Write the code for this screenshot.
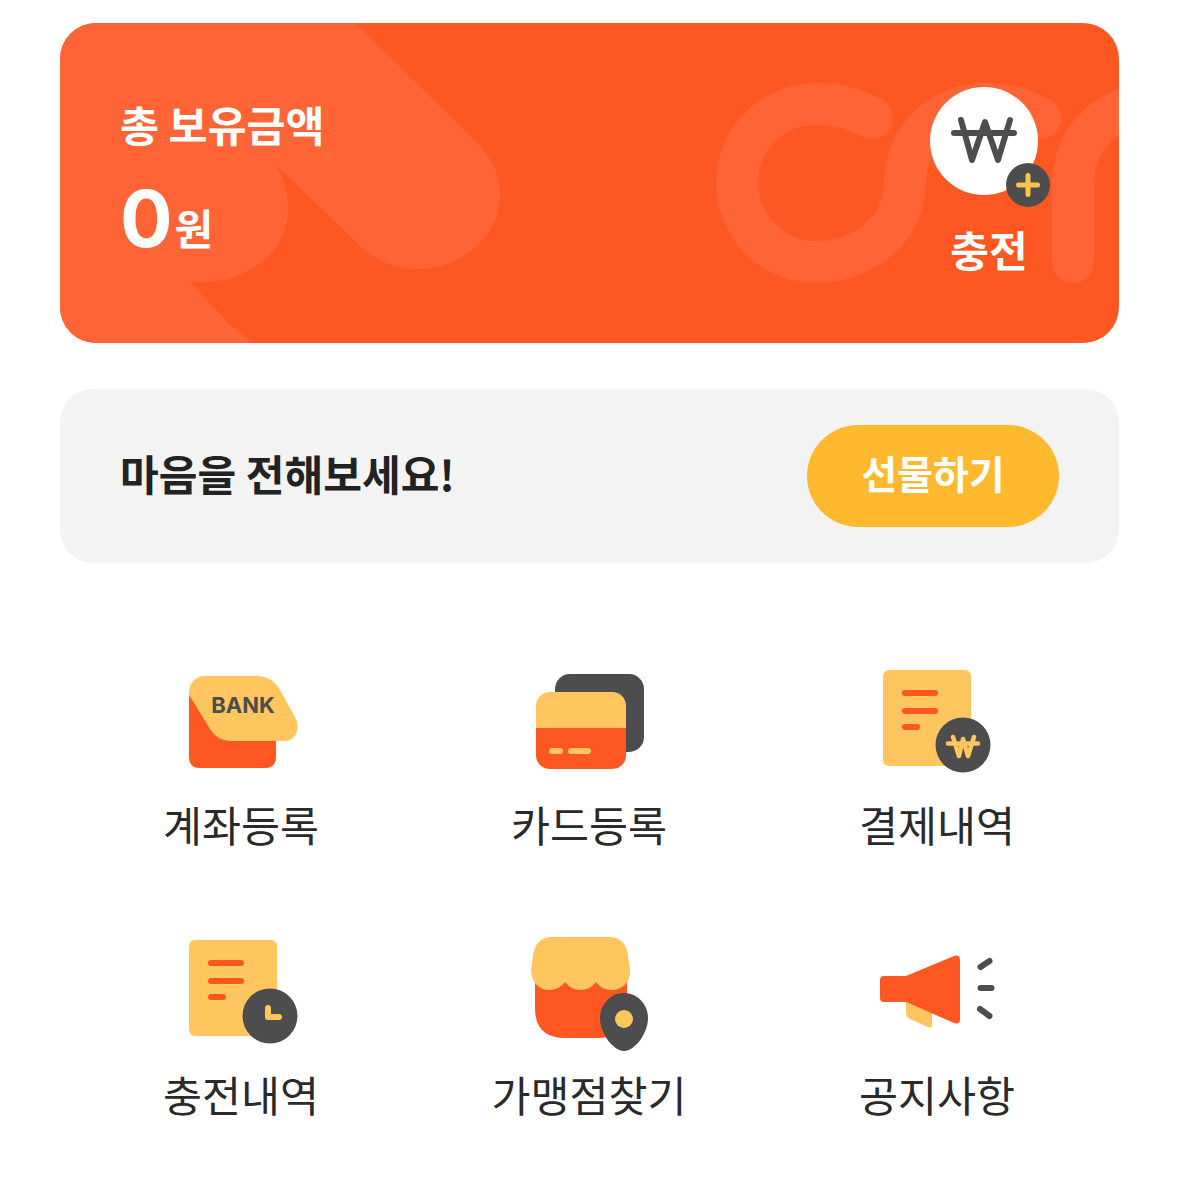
<script>
  const menu = ['계좌등록', '카드등록', '결제내역', '충전내역', '가맹점찾기', '공지사항'];
</script>

<main class="page">
  <section class="card">
    <svg class="deco" viewBox="60 23 1059 320" aria-hidden="true">
      <path class="fill" d="M60 23 H356 L472 138 C490 155 500 172 500 194 C500 236 462 269 418 269 C396 269 376 261 360 246 L276 165 C284 178 288 192 288 209 C288 250 250 282 202 282 H190 L229 324 C238 331 246 337 252 343 H60Z" />
      <path class="stroke" d="M872 118 C856 109 838 104 816 104 A79 79 0 0 0 737 183 A79 79 0 0 0 816 262 A89 79 0 0 0 905 183 A79 79 0 0 1 984 104 C1006 104 1024 109 1040 118" />
      <path class="stroke" d="M1073 262 V183 A79 79 0 0 1 1152 104" />
    </svg>
    <div class="balance">
      <h2 class="title">총 보유금액</h2>
      <p class="amount"><strong>0</strong><span>원</span></p>
    </div>
    <div class="charge">
      <div class="coin">
        <svg class="won" viewBox="946 118 76 54">
          <path d="M954 137 H1014 M961 124 L972 164 L985 126 L998 164 L1010 124" />
        </svg>
        <span class="plus">
          <svg viewBox="0 0 44 44"><path d="M22 12.5 V31.5 M12.5 22 H31.5" /></svg>
        </span>
      </div>
      <span class="charge-label">충전</span>
    </div>
  </section>

  <section class="gift">
    <p>마음을 전해보세요!</p>
    <button>선물하기</button>
  </section>

  <section class="menu">
    <div class="item">
      <svg viewBox="181 660 120 120">
        <path d="M189 692 H276 V757 Q276 768 265 768 H200 Q189 768 189 757Z" fill="#FF5722" />
        <path d="M189 695 V692 C189 683 196 676 205 676 H256 C267 676 274 680 280 690 L295 717 C301 728 296 741 284 741 H232 C222 741 215 737 210 729Z" fill="#FFC55F" />
        <text x="243" y="713" text-anchor="middle" class="bank">BANK</text>
      </svg>
      <span>{menu[0]}</span>
    </div>
    <div class="item">
      <svg viewBox="529 660 120 120">
        <rect x="555" y="674" width="89" height="78" rx="15" fill="#4D4D4D" />
        <path d="M536 728 H626 V755 C626 763 620 769 612 769 H550 C542 769 536 763 536 755Z" fill="#FF5722" />
        <path d="M536 728 V706 C536 698 542 692 550 692 H612 C620 692 626 698 626 706 V728Z" fill="#FFC55F" />
        <rect x="549" y="748" width="14" height="6" rx="3" fill="#FFC55F" />
        <rect x="568" y="748" width="23" height="6" rx="3" fill="#FFC55F" />
      </svg>
      <span>{menu[1]}</span>
    </div>
    <div class="item">
      <svg viewBox="877 660 120 120">
        <rect x="883" y="670" width="88" height="96" rx="6" fill="#FFC55F" />
        <path class="lines" d="M905 693 H935 M905 711 H935 M905 727 H917" />
        <circle cx="963" cy="745" r="27.5" fill="#4D4D4D" />
        <path class="won-y" d="M948 743.5 H978 M953 737 L959 756 L963 739 L968 756 L974 737" />
      </svg>
      <span>{menu[2]}</span>
    </div>
    <div class="item">
      <svg viewBox="181 930 120 120">
        <rect x="189" y="940" width="88" height="96" rx="6" fill="#FFC55F" />
        <path class="lines" d="M211 963 H241 M211 981 H241 M211 997 H223" />
        <circle cx="270" cy="1016" r="27.5" fill="#4D4D4D" />
        <path class="hands" d="M268 1008 V1017 H279" />
      </svg>
      <span>{menu[3]}</span>
    </div>
    <div class="item">
      <svg viewBox="529 930 120 120">
        <path d="M535 970 H627 V1008 C627 1028 617 1038 597 1038 H565 C545 1038 535 1028 535 1008Z" fill="#FF5722" />
        <path d="M552 937 H609 C622 937 627 946 628 956 L630 970 C631 982 622 990 612 990 C605 990 599 987 596 982 C592 987 587 990 581 990 C574 990 569 987 565 982 C561 987 556 990 549 990 C539 990 531 982 531 970 L533 956 C534 945 540 937 552 937Z" fill="#FFC55F" />
        <path d="M624 993 C638 993 648 1005 648 1018 C648 1033 635 1051 624 1051 C613 1051 600 1033 600 1018 C600 1005 610 993 624 993Z" fill="#4D4D4D" />
        <circle cx="624" cy="1019" r="9" fill="#FFC55F" />
      </svg>
      <span>{menu[4]}</span>
    </div>
    <div class="item">
      <svg viewBox="877 930 120 120">
        <path d="M906 1002 L932 1013 V1024 Q932 1029 928 1027 L910 1019 Q906 1017 906 1013Z" fill="#FFC55F" />
        <path d="M884 976 H906 L954 956 Q960 954 960 960 V1019 Q960 1025 954 1023 L906 1002 H884 Q880 1002 880 998 V980 Q880 976 884 976Z" fill="#FF5722" />
        <path class="rays" d="M980.5 967 L989.5 961 M980.5 988 H991.5 M980 1009 L989.5 1016" />
      </svg>
      <span>{menu[5]}</span>
    </div>
  </section>
</main>

<style>
  :global(body) {
    background: #fff;
    font-family: "Noto Sans CJK KR", "Noto Sans", sans-serif;
  }
  .page {
    padding: 23px 60px 0;
    height: 1174px;
  }
  .card {
    position: relative;
    display: flex;
    justify-content: space-between;
    height: 320px;
    border-radius: 36px;
    overflow: hidden;
    background: #ff5722;
    color: #fff;
    box-sizing: border-box;
  }
  .deco {
    position: absolute;
    inset: 0;
    width: 100%;
    height: 100%;
  }
  .fill { fill: #ff6436; }
  .stroke {
    fill: none;
    stroke: #ff6436;
    stroke-width: 42;
    stroke-linecap: round;
  }
  .balance {
    position: relative;
    padding: 79px 0 0 60px;
  }
  .title {
    margin: 0;
    font-size: 42.4px;
    line-height: 44px;
    font-weight: 700;
  }
  .amount {
    margin: 25px 0 0;
    display: flex;
    align-items: baseline;
    gap: 0;
    line-height: 76px;
  }
  .amount strong {
    font: 700 78px Inter, sans-serif;
  }
  .amount span {
    position: relative;
    top: -2px;
    margin-left: 2px;
    font-size: 42px;
    font-weight: 700;
  }
  .charge {
    position: relative;
    display: flex;
    flex-direction: column;
    align-items: center;
    padding: 64px 71px 0 0;
  }
  .coin {
    position: relative;
    display: flex;
    align-items: center;
    justify-content: center;
    width: 108px;
    height: 108px;
    margin-right: 10px;
    border-radius: 50%;
    background: #fff;
  }
  .won {
    width: 76px;
    height: 54px;
  }
  .won path {
    fill: none;
    stroke: #4d4d4d;
    stroke-width: 6;
    stroke-linecap: round;
    stroke-linejoin: round;
  }
  .plus {
    position: absolute;
    right: -12px;
    bottom: -12px;
    width: 44px;
    height: 44px;
    border-radius: 50%;
    background: #4d4d4d;
    display: block;
  }
  .plus svg {
    display: block;
    width: 44px;
    height: 44px;
  }
  .plus path {
    stroke: #ffc44a;
    stroke-width: 5;
    stroke-linecap: round;
  }
  .charge-label {
    margin-top: 32px;
    font-size: 42px;
    line-height: 44px;
    font-weight: 700;
  }
  .gift {
    display: flex;
    align-items: center;
    justify-content: space-between;
    height: 174px;
    margin-top: 46px;
    padding: 0 60px 0 60px;
    border-radius: 33px;
    background: #f3f3f3;
    box-sizing: border-box;
  }
  .gift p {
    margin: 0 0 7px;
    font-size: 42.1px;
    font-weight: 700;
    color: #222;
  }
  .gift button {
    width: 252px;
    height: 102px;
    padding: 0 0 8px;
    border: 0;
    border-radius: 51px;
    background: #ffb92e;
    color: #fff;
    font: 700 39px "Noto Sans CJK KR", sans-serif;
  }
  .menu {
    display: grid;
    grid-template-columns: repeat(3, 348px);
    margin: 97px 0 0 7px;
    row-gap: 72px;
  }
  .item {
    display: flex;
    flex-direction: column;
    align-items: center;
    height: 198px;
  }
  .item svg {
    display: block;
    width: 120px;
    height: 120px;
    overflow: visible;
  }
  .item span {
    margin-top: 19px;
    font-size: 42.4px;
    line-height: 50px;
    color: #2a2a2a;
  }
  .bank {
    font: 700 22px Inter, sans-serif;
    fill: #4d4d4d;
  }
  .lines {
    fill: none;
    stroke: #ff5722;
    stroke-width: 6;
    stroke-linecap: round;
  }
  .won-y {
    fill: none;
    stroke: #ffc55f;
    stroke-width: 4.5;
    stroke-linecap: round;
    stroke-linejoin: round;
  }
  .hands {
    fill: none;
    stroke: #ffc55f;
    stroke-width: 6;
    stroke-linecap: round;
    stroke-linejoin: round;
  }
  .rays {
    fill: none;
    stroke: #4d4d4d;
    stroke-width: 6;
    stroke-linecap: round;
  }
</style>
